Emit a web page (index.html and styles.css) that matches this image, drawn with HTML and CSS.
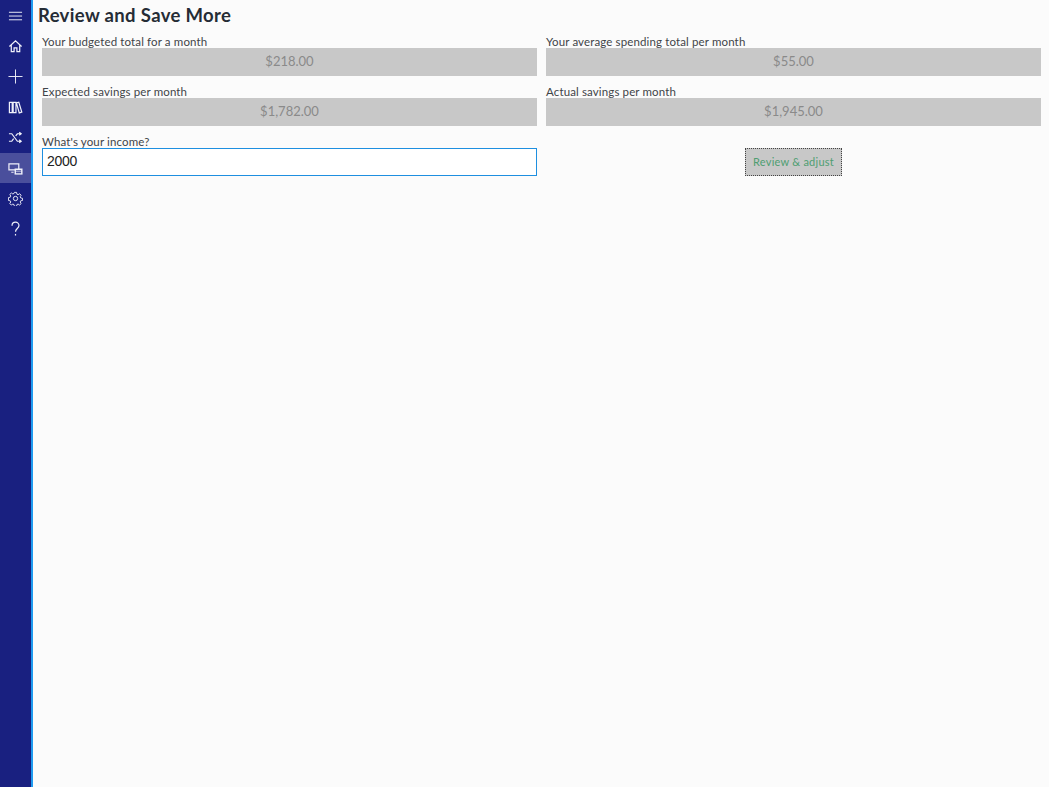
FILE: index.html
```html
<!DOCTYPE html>
<html lang="en">
<head>
<meta charset="utf-8">
<title>Review and Save More</title>
<link rel="stylesheet" href="styles.css">
</head>
<body>
<div class="app">
  <nav class="rail">
    <div class="rail-item">
      <svg class="icon" viewBox="0 0 16 16"><path d="M1 3.500h14M1 7.500h14M1 11.500h14"/></svg>
    </div>
    <div class="rail-item">
      <svg class="icon heavy" viewBox="0 0 16 16"><path d="M1.500 8 8 2l6.500 6M3.500 6.500V13.500H6.500V9.500H9.500V13.500H12.500V6.500"/></svg>
    </div>
    <div class="rail-item">
      <svg class="icon" viewBox="0 0 16 16"><path d="M8 .5v15M.5 8h15"/></svg>
    </div>
    <div class="rail-item">
      <svg class="icon heavy" viewBox="0 0 16 16"><path d="M1.500 2.500h3v11h-3zM5.500 2.500h3v11h-3zM9 3l2.500-.7 3.200 10.700-2.700.8z"/></svg>
    </div>
    <div class="rail-item">
      <svg class="icon heavy" viewBox="0 0 16 16"><path d="M1 4h3l6 8h3.500M1 12h3l2-2.700M8.200 6.300 10 4h3.500M12 2.500 14 4l-2 1.500M12 10.500l2 1.500-2 1.500"/></svg>
    </div>
    <div class="rail-item active">
      <svg class="icon heavy" viewBox="0 0 16 16"><path class="solid" d="M7 8h8.500v6.500H7z"/><path d="M1 3h10.500v6.500H1zM3.500 12H6"/><path class="cut" d="M8.500 10.500h5.500M8.500 12.500h5.500"/></svg>
    </div>
    <div class="rail-item">
      <svg class="icon" viewBox="0 0 16 16"><circle cx="8" cy="8" r="2.300"/><path d="M6.800 1.200h2.400l.4 2 1.300.6 1.800-1.100 1.600 1.700-1.100 1.700.6 1.300 2 .4v2.400l-2 .4-.6 1.300 1.100 1.800-1.700 1.600-1.700-1.100-1.300.6-.4 2H6.800l-.4-2-1.300-.6-1.800 1.100-1.600-1.700 1.100-1.700-.6-1.300-2-.4V7l2-.4.600-1.300-1.100-1.800 1.700-1.600 1.700 1.100 1.300-.6z" transform="translate(.3 .3) scale(.96)"/></svg>
    </div>
    <div class="rail-item">
      <svg class="icon heavy" viewBox="0 0 16 16"><path d="M4.300 5C4.300 2.800 6 1.300 8 1.300s3.700 1.400 3.700 3.500c0 3.200-3.700 3.200-3.700 6.700"/><path d="M8 13.800v1.700"/></svg>
    </div>
  </nav>
  <main class="page">
    <h1 class="title">Review and Save More</h1>
    <div class="form">
      <div class="field">
        <label class="label">Your budgeted total for a month</label>
        <div class="readout">$218.00</div>
      </div>
      <div class="field">
        <label class="label">Your average spending total per month</label>
        <div class="readout">$55.00</div>
      </div>
      <div class="field">
        <label class="label">Expected savings per month</label>
        <div class="readout">$1,782.00</div>
      </div>
      <div class="field">
        <label class="label">Actual savings per month</label>
        <div class="readout">$1,945.00</div>
      </div>
      <div class="field">
        <label class="label" for="income">What's your income?</label>
        <input class="income" id="income" type="text" value="2000">
      </div>
      <div class="action">
        <button class="review" type="button">Review &amp; adjust</button>
      </div>
    </div>
  </main>
</div>
</body>
</html>
```
FILE: styles.css
```css
* { box-sizing: border-box; }
html, body { margin: 0; height: 100%; }
body {
  background: #fbfbfb;
  font-family: "Lato", "Liberation Sans", sans-serif;
  color: #333;
  overflow: hidden;
}
.app { display: flex; height: 787px; }
.rail {
  flex: 0 0 33px;
  background: #192080;
  border-right: 2px solid #1f9bf0;
  padding-top: 1px;
  display: flex;
  flex-direction: column;
}
.rail-item {
  height: 30.400px;
  display: flex;
  align-items: center;
  justify-content: center;
}
.rail-item.active { background: #4a4f9c; }
.icon {
  width: 15px;
  height: 15px;
  fill: none;
  stroke: #f0f1fa;
  stroke-width: 1;
}
.icon.heavy { stroke-width: 1.300; }
.icon .solid { fill: #f0f1fa; stroke: none; }
.icon .cut { stroke: #4a4f9c; }
.page { flex: 1; min-width: 0; padding: 3px 8px 0 5px; }
.title {
  margin: 0;
  height: 33px;
  padding-top: 1px;
  font-size: 18.500px;
  line-height: 23px;
  font-weight: 700;
  color: #252c35;
  letter-spacing: .35px;
}
.form {
  margin-left: 4px;
  display: grid;
  grid-template-columns: 495px 495px;
  column-gap: 9px;
  row-gap: 10px;
}
.field { display: flex; flex-direction: column; }
.label {
  height: 12px;
  font-size: 11.500px;
  line-height: 11px;
  color: #3f4448;
  white-space: nowrap;
  letter-spacing: .13px;
}
.readout {
  height: 28px;
  background: #c8c8c8;
  color: #8a8a8a;
  font-size: 13px;
  line-height: 26px;
  text-align: center;
}
.income {
  height: 28px;
  width: 100%;
  padding: 0 4px 2px;
  border: 1px solid #1e8fe0;
  background: #fff;
  color: #222;
  font-family: "Liberation Sans", sans-serif;
  font-size: 14px;
  letter-spacing: -.25px;
  outline: none;
}
.action {
  display: flex;
  justify-content: center;
  align-items: flex-end;
}
.review {
  width: 97px;
  height: 28px;
  padding: 0 0 2px;
  background: #c8c8c8;
  border: 1px dotted #444;
  color: #4f9e72;
  font-family: "Lato", "Liberation Sans", sans-serif;
  font-size: 11px;
  letter-spacing: .25px;
}
```
